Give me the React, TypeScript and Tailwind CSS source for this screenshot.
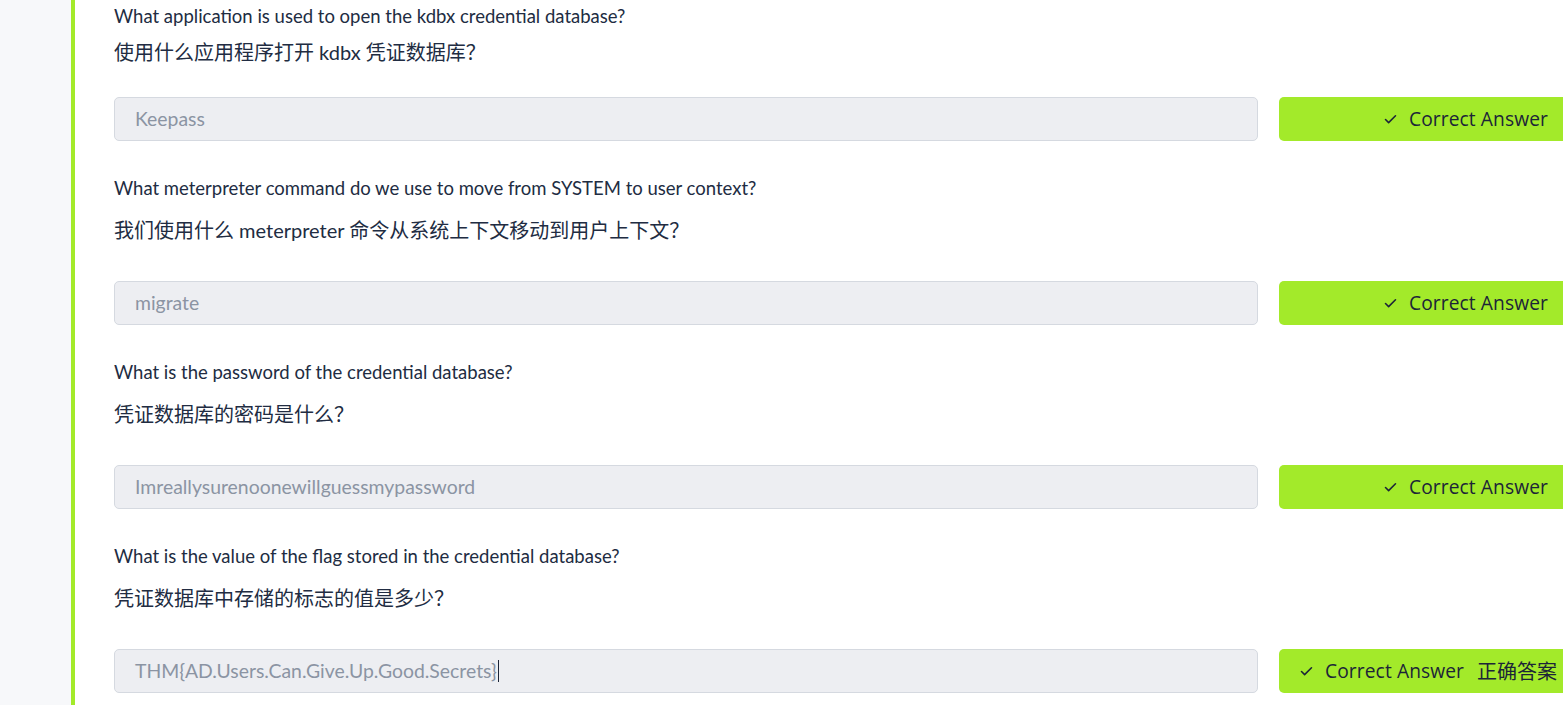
import { Check } from 'lucide-react'

type Question = {
  en: string
  zh: string
  answer: string
  caret?: boolean
  zhLabel?: boolean
}

const questions: Question[] = [
  {
    en: 'What application is used to open the kdbx credential database?',
    zh: '使用什么应用程序打开 kdbx 凭证数据库？',
    answer: 'Keepass',
  },
  {
    en: 'What meterpreter command do we use to move from SYSTEM to user context?',
    zh: '我们使用什么 meterpreter 命令从系统上下文移动到用户上下文？',
    answer: 'migrate',
  },
  {
    en: 'What is the password of the credential database?',
    zh: '凭证数据库的密码是什么？',
    answer: 'Imreallysurenoonewillguessmypassword',
  },
  {
    en: 'What is the value of the flag stored in the credential database?',
    zh: '凭证数据库中存储的标志的值是多少？',
    answer: 'THM{AD.Users.Can.Give.Up.Good.Secrets}',
    caret: true,
    zhLabel: true,
  },
]

const sans = "font-['Lato','Noto_Sans_CJK_SC',sans-serif]"

function AnswerRow({ q }: { q: Question }) {
  return (
    <div className="flex items-stretch gap-[21px] h-[44px]">
      <div className="w-[1144px] shrink-0 rounded-[5px] border border-[#d5d9e0] bg-[#edeef2] px-[20px] flex items-center">
        <span className={`${sans} text-[19.4px] text-[#8b94a3]`}>{q.answer}</span>
        {q.caret && <span className="ml-[1px] h-[22px] w-px bg-[#1c2538]" />}
      </div>
      <button
        className={`w-[300px] shrink-0 rounded-[5px] bg-[#a3ea2a] flex items-center gap-[11px] text-[#1c2538] ${
          q.zhLabel ? 'pl-[20px]' : 'justify-end pr-[31px]'
        }`}
      >
        <Check size={15} strokeWidth={2.5} />
        <span className="font-['Open_Sans',sans-serif] text-[19.2px] tracking-[0.1px]">Correct Answer</span>
        {q.zhLabel && (
          <span className="ml-[2px] font-['Noto_Sans_CJK_SC',sans-serif] text-[20px]">正确答案</span>
        )}
      </button>
    </div>
  )
}

export default function App() {
  return (
    <div className="flex h-[705px] w-[1563px] overflow-hidden bg-white">
      <div className="w-[71px] shrink-0 bg-[#f7f8fa]" />
      <div className="w-[4px] shrink-0 bg-[#a3ea2a]" />
      <div className="pl-[39px] pt-[2px] text-[#212c42]">
        {questions.map((q, i) => (
          <div key={i} className={i === 0 ? '' : 'mt-[33px]'}>
            <p className={`${sans} text-[18.5px] leading-[28px]`}>{q.en}</p>
            <p className={`${sans} text-[20px] leading-[28px] ${i === 0 ? 'mt-[8px]' : 'mt-[14px]'}`}>{q.zh}</p>
            <div className={i === 0 ? 'mt-[31px]' : 'mt-[37px]'}>
              <AnswerRow q={q} />
            </div>
          </div>
        ))}
      </div>
    </div>
  )
}
